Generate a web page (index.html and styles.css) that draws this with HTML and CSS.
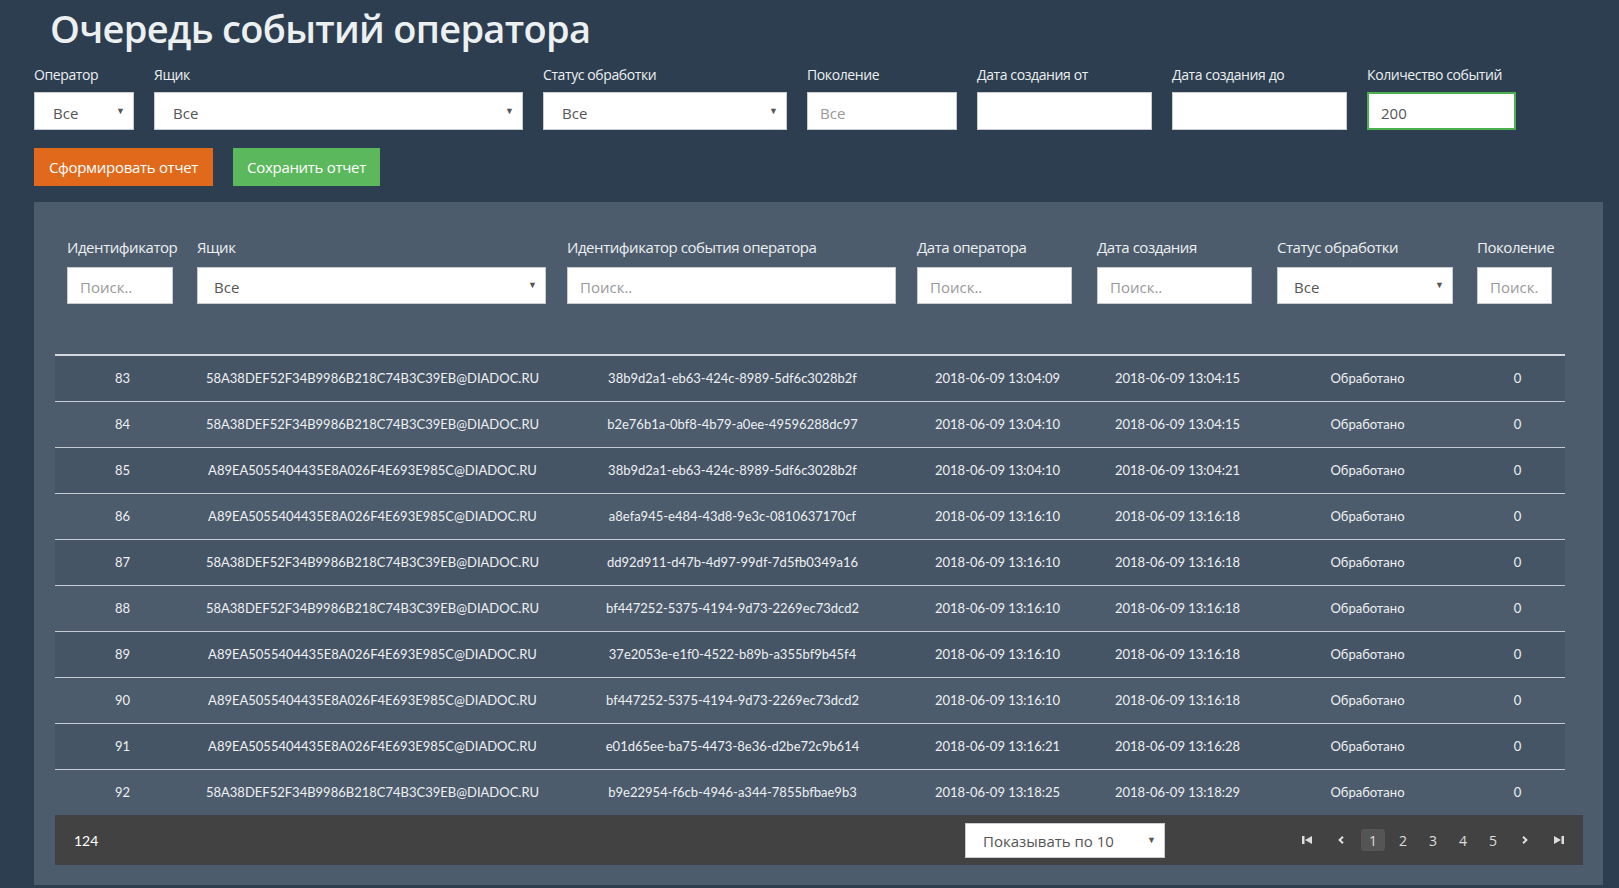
FILE: index.html
```html
<!DOCTYPE html>
<html lang="ru">
<head>
    <meta charset="UTF-8">
    <title>Очередь событий оператора</title>
    <link rel="stylesheet" href="styles.css">
</head>
<body>
    <div class="page">
        <h1>Очередь событий оператора</h1>

        <div class="filters">
            <div class="field w-operator">
                <label>Оператор</label>
                <div class="select-wrap"><select><option>Все</option></select></div>
            </div>
            <div class="field w-box">
                <label>Ящик</label>
                <div class="select-wrap"><select><option>Все</option></select></div>
            </div>
            <div class="field w-status">
                <label>Статус обработки</label>
                <div class="select-wrap"><select><option>Все</option></select></div>
            </div>
            <div class="field w-gen">
                <label>Поколение</label>
                <input type="text" placeholder="Все">
            </div>
            <div class="field w-date">
                <label>Дата создания от</label>
                <input type="text">
            </div>
            <div class="field w-date">
                <label>Дата создания до</label>
                <input type="text">
            </div>
            <div class="field w-count">
                <label>Количество событий</label>
                <input type="text" class="active" value="200">
            </div>
        </div>

        <div class="actions">
            <button class="btn btn-orange">Сформировать отчет</button>
            <button class="btn btn-green">Сохранить отчет</button>
        </div>

        <div class="panel">
            <table class="events">
                <colgroup>
                    <col style="width:130px">
                    <col style="width:370px">
                    <col style="width:350px">
                    <col style="width:180px">
                    <col style="width:180px">
                    <col style="width:200px">
                    <col style="width:100px">
                </colgroup>
                <thead>
                    <tr>
                        <th><div class="th-label">Идентификатор</div><input class="search w-id" placeholder="Поиск.."></th>
                        <th><div class="th-label">Ящик</div><div class="select-wrap small w-tbox"><select><option>Все</option></select></div></th>
                        <th><div class="th-label">Идентификатор события оператора</div><input class="search w-evt" placeholder="Поиск.."></th>
                        <th><div class="th-label">Дата оператора</div><input class="search w-tdate" placeholder="Поиск.."></th>
                        <th><div class="th-label">Дата создания</div><input class="search w-tdate" placeholder="Поиск.."></th>
                        <th><div class="th-label">Статус обработки</div><div class="select-wrap small w-tstatus"><select><option>Все</option></select></div></th>
                        <th><div class="th-label">Поколение</div><input class="search w-tgen" placeholder="Поиск.."></th>
                    </tr>
                </thead>
                <tbody>
                    <tr><td>83</td><td>58A38DEF52F34B9986B218C74B3C39EB@DIADOC.RU</td><td>38b9d2a1-eb63-424c-8989-5df6c3028b2f</td><td>2018-06-09 13:04:09</td><td>2018-06-09 13:04:15</td><td>Обработано</td><td>0</td></tr>
                    <tr><td>84</td><td>58A38DEF52F34B9986B218C74B3C39EB@DIADOC.RU</td><td>b2e76b1a-0bf8-4b79-a0ee-49596288dc97</td><td>2018-06-09 13:04:10</td><td>2018-06-09 13:04:15</td><td>Обработано</td><td>0</td></tr>
                    <tr><td>85</td><td>A89EA5055404435E8A026F4E693E985C@DIADOC.RU</td><td>38b9d2a1-eb63-424c-8989-5df6c3028b2f</td><td>2018-06-09 13:04:10</td><td>2018-06-09 13:04:21</td><td>Обработано</td><td>0</td></tr>
                    <tr><td>86</td><td>A89EA5055404435E8A026F4E693E985C@DIADOC.RU</td><td>a8efa945-e484-43d8-9e3c-0810637170cf</td><td>2018-06-09 13:16:10</td><td>2018-06-09 13:16:18</td><td>Обработано</td><td>0</td></tr>
                    <tr><td>87</td><td>58A38DEF52F34B9986B218C74B3C39EB@DIADOC.RU</td><td>dd92d911-d47b-4d97-99df-7d5fb0349a16</td><td>2018-06-09 13:16:10</td><td>2018-06-09 13:16:18</td><td>Обработано</td><td>0</td></tr>
                    <tr><td>88</td><td>58A38DEF52F34B9986B218C74B3C39EB@DIADOC.RU</td><td>bf447252-5375-4194-9d73-2269ec73dcd2</td><td>2018-06-09 13:16:10</td><td>2018-06-09 13:16:18</td><td>Обработано</td><td>0</td></tr>
                    <tr><td>89</td><td>A89EA5055404435E8A026F4E693E985C@DIADOC.RU</td><td>37e2053e-e1f0-4522-b89b-a355bf9b45f4</td><td>2018-06-09 13:16:10</td><td>2018-06-09 13:16:18</td><td>Обработано</td><td>0</td></tr>
                    <tr><td>90</td><td>A89EA5055404435E8A026F4E693E985C@DIADOC.RU</td><td>bf447252-5375-4194-9d73-2269ec73dcd2</td><td>2018-06-09 13:16:10</td><td>2018-06-09 13:16:18</td><td>Обработано</td><td>0</td></tr>
                    <tr><td>91</td><td>A89EA5055404435E8A026F4E693E985C@DIADOC.RU</td><td>e01d65ee-ba75-4473-8e36-d2be72c9b614</td><td>2018-06-09 13:16:21</td><td>2018-06-09 13:16:28</td><td>Обработано</td><td>0</td></tr>
                    <tr><td>92</td><td>58A38DEF52F34B9986B218C74B3C39EB@DIADOC.RU</td><td>b9e22954-f6cb-4946-a344-7855bfbae9b3</td><td>2018-06-09 13:18:25</td><td>2018-06-09 13:18:29</td><td>Обработано</td><td>0</td></tr>
                </tbody>
            </table>

            <div class="table-footer">
                <div class="total">124</div>
                <div class="select-wrap page-size"><select><option>Показывать по 10</option></select></div>
                <div class="pager">
                    <span class="pg icon"><svg width="10" height="8" viewBox="0 0 10 8"><rect x="0" y="0" width="2.5" height="8" fill="#ddd"/><polygon points="10,0 3,4 10,8" fill="#ddd"/></svg></span>
                    <span class="pg icon"><svg width="6" height="8" viewBox="0 0 6 8"><polyline points="5,0.8 1.6,4 5,7.2" fill="none" stroke="#ddd" stroke-width="2"/></svg></span>
                    <span class="pg current">1</span>
                    <span class="pg">2</span>
                    <span class="pg">3</span>
                    <span class="pg">4</span>
                    <span class="pg">5</span>
                    <span class="pg icon"><svg width="6" height="8" viewBox="0 0 6 8"><polyline points="1,0.8 4.4,4 1,7.2" fill="none" stroke="#ddd" stroke-width="2"/></svg></span>
                    <span class="pg icon"><svg width="10" height="8" viewBox="0 0 10 8"><polygon points="0,0 7,4 0,8" fill="#ddd"/><rect x="7.5" y="0" width="2.5" height="8" fill="#ddd"/></svg></span>
                </div>
            </div>
        </div>
    </div>
</body>
</html>
```

FILE: styles.css
```css
body {
    margin: 0;
    background-color: #2c3e50;
    font-family: "Open Sans", "Liberation Sans", sans-serif;
    color: #ecf0f1;
}
.page {
    padding: 4px 16px 0 34px;
}
h1 {
    margin: 0 0 13px 16px;
    font-size: 38px;
    font-weight: 600;
    line-height: 48px;
    letter-spacing: -0.7px;
    color: #ecf0f1;
}

/* top filters */
.filters {
    display: flex;
    gap: 20px;
}
.field label {
    display: block;
    font-size: 14px;
    line-height: 20px;
    letter-spacing: -0.4px;
    color: #ecf0f1;
    margin-bottom: 7px;
}
.w-operator { width: 100px; }
.w-box { width: 369px; }
.w-status { width: 244px; }
.w-gen { width: 150px; }
.w-date { width: 175px; }
.w-count { width: 149px; }

.select-wrap {
    position: relative;
}
.select-wrap::after {
    content: "\25BC";
    position: absolute;
    right: 9px;
    top: 12px;
    font-size: 9px;
    color: #555;
    pointer-events: none;
}
select, input {
    box-sizing: border-box;
    width: 100%;
    height: 38px;
    border: 1px solid #c8ccd0;
    border-radius: 0;
    background: #fff;
    font-family: "Open Sans", "Liberation Sans", sans-serif;
    font-size: 15px;
    color: #555;
    padding: 3px 18px 0;
    margin: 0;
    outline: none;
}
select {
    -webkit-appearance: none;
    appearance: none;
}
input::placeholder {
    color: #999;
}
.field input {
    padding: 3px 12px 0;
}
input.active {
    border: 2px solid #4caf50;
}

/* buttons */
.actions {
    display: flex;
    gap: 20px;
    margin-top: 18px;
}
.btn {
    height: 38px;
    padding: 0 13px;
    border: none;
    border-radius: 0;
    font-family: "Open Sans", "Liberation Sans", sans-serif;
    font-size: 15px;
    letter-spacing: -0.3px;
    color: #fff;
    cursor: pointer;
}
.btn-orange {
    width: 179px;
    background: #e0691c;
}
.btn-green {
    width: 147px;
    background: #5cb85c;
}

/* panel with table */
.panel {
    margin-top: 16px;
    background: #4c5c6c;
    padding: 35px 20px 20px 21px;
}
.events {
    width: 1510px;
    table-layout: fixed;
    border-collapse: collapse;
}
.events th {
    text-align: left;
    font-weight: normal;
    padding: 0 0 50px 12px;
    vertical-align: top;
}
.th-label {
    font-size: 15px;
    line-height: 21px;
    letter-spacing: -0.45px;
    color: #ecf0f1;
    margin-bottom: 9px;
    white-space: nowrap;
}
.events th input, .events th select {
    height: 37px;
    font-size: 15px;
}
.events th input {
    padding: 2px 12px 0;
}
.events th select {
    padding: 2px 16px 0;
}
.select-wrap.small::after {
    top: 11px;
}
.w-id { width: 106px; }
.w-tbox { width: 349px; }
.w-evt { width: 329px; }
.w-tdate { width: 155px; }
.w-tstatus { width: 176px; }
.w-tgen { width: 75px; }

.events tbody tr {
    height: 46px;
    border-bottom: 1px solid #c5cbd1;
}
.events tbody tr:first-child {
    border-top: 2px solid #d3d7db;
}
.events tbody tr:last-child {
    border-bottom: none;
}
.events tbody tr:nth-child(odd) {
    background: #465565;
}
.events td {
    text-align: center;
    padding: 0 0 0 5px;
    font-family: Lato, "Open Sans", sans-serif;
    font-size: 13px;
    color: #eef0f2;
    white-space: nowrap;
}

/* footer */
.table-footer {
    display: flex;
    align-items: center;
    height: 50px;
    background: #424242;
    padding: 0 10px 0 19px;
}
.total {
    width: 891px;
    font-family: Lato, "Open Sans", sans-serif;
    font-size: 14px;
    color: #fff;
}
.page-size {
    width: 200px;
}
.page-size select {
    height: 35px;
    font-size: 15px;
    padding: 2px 17px 0;
}
.page-size::after {
    top: 10px;
}
.pager {
    margin-left: auto;
    display: flex;
    align-items: center;
    gap: 6px;
}
.pg {
    width: 24px;
    height: 22px;
    display: flex;
    align-items: center;
    justify-content: center;
    font-size: 14px;
    color: #ddd;
    border-radius: 3px;
}
.pg.icon {
    width: 28px;
}
.pg.current {
    background: #555;
}
```
